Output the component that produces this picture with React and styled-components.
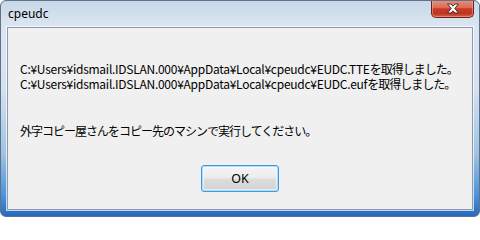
import React from "react";
import styled, { createGlobalStyle } from "styled-components";

const Global = createGlobalStyle`
  html, body { margin: 0; padding: 0; background: #ffffff; }
  body { width: 480px; height: 217px; overflow: hidden; }
`;

const Window = styled.div`
  box-sizing: border-box;
  width: 480px;
  height: 217px;
  display: flex;
  flex-direction: column;
  border: 1px solid #5f7388;
  border-radius: 6px;
  background: linear-gradient(
    to bottom,
    #c8d7e7 0%,
    #dce6f1 12%,
    #d6e2ef 40%,
    #a2c4e6 70%,
    #4f94da 90%,
    #2a68bd 100%
  );
  font-family: "Noto Sans CJK JP", "Noto Sans", sans-serif;
  overflow: hidden;
`;

const TitleBar = styled.div`
  height: 26px;
  display: flex;
  align-items: flex-start;
  justify-content: space-between;
  padding-left: 7px;
  padding-right: 5px;
`;

const Title = styled.div`
  font-family: "Noto Sans", "Noto Sans CJK JP", sans-serif;
  font-size: 12px;
  line-height: 14px;
  margin-top: 6px;
  color: #000;
`;

const CloseButton = styled.div`
  box-sizing: border-box;
  width: 43px;
  height: 18px;
  margin-top: -1px;
  display: flex;
  align-items: center;
  justify-content: center;
  border: 1px solid #6b2016;
  border-top: none;
  border-radius: 0 0 5px 5px;
  background: linear-gradient(
    to bottom,
    #e8917f 0%,
    #dc6a54 45%,
    #c63a24 52%,
    #bf3520 80%,
    #d46249 100%
  );
  box-shadow: inset 0 0 0 1px rgba(255, 190, 175, 0.45);
`;

const Client = styled.div`
  flex: 1;
  display: flex;
  flex-direction: column;
  margin: 0 6px 6px 6px;
  background: #f0f0f0;
  border: 1px solid #8d9aab;
  box-shadow: 0 0 0 1px rgba(255, 255, 255, 0.7);
`;

const Message = styled.div`
  padding: 33px 12px 0 12px;
  font-size: 12px;
  line-height: 15px;
  color: #000;
  letter-spacing: -0.27px;
  white-space: nowrap;
`;

const Paragraph = styled.div`
  margin-top: ${(p) => p.$gap || 0}px;
`;

const Line = styled.div`
  height: 15px;
`;

const Jp = styled.span`
  letter-spacing: -1px;
`;

const Footer = styled.div`
  margin-top: auto;
  display: flex;
  justify-content: center;
  padding-bottom: 17px;
`;

const Button = styled.button`
  box-sizing: border-box;
  width: 78px;
  height: 27px;
  border: 1px solid #3c9ce2;
  border-radius: 3px;
  background: linear-gradient(
    to bottom,
    #f4f4f4 0%,
    #ececec 48%,
    #dddddd 52%,
    #d2d2d2 100%
  );
  box-shadow: inset 0 0 0 1px #a9dcf6, inset 0 0 0 2px rgba(255, 255, 255, 0.5);
  font-family: "Noto Sans", sans-serif;
  font-size: 12.5px;
  color: #000;
  padding: 0;
`;

function CloseGlyph() {
  return (
    <svg width="14" height="11" viewBox="0 0 14 11">
      <path
        d="M1.5 1 H5 L7 3.2 L9 1 H12.5 L8.8 5.5 L12.5 10 H9 L7 7.8 L5 10 H1.5 L5.2 5.5 Z"
        fill="#ffffff"
        stroke="#4a2b28"
        strokeWidth="1"
        strokeLinejoin="round"
      />
    </svg>
  );
}

export default function App() {
  return (
    <>
      <Global />
      <Window>
        <TitleBar>
          <Title>cpeudc</Title>
          <CloseButton>
            <CloseGlyph />
          </CloseButton>
        </TitleBar>
        <Client>
          <Message>
            <Paragraph>
              <Line>
                C:¥Users¥idsmail.IDSLAN.000¥AppData¥Local¥cpeudc¥EUDC.TTE<Jp>を取得しました。</Jp>
              </Line>
              <Line>
                C:¥Users¥idsmail.IDSLAN.000¥AppData¥Local¥cpeudc¥EUDC.euf<Jp>を取得しました。</Jp>
              </Line>
            </Paragraph>
            <Paragraph $gap={32}>
              <Line>
                <Jp>外字コピー屋さんをコピー先のマシンで実行してください。</Jp>
              </Line>
            </Paragraph>
          </Message>
          <Footer>
            <Button>OK</Button>
          </Footer>
        </Client>
      </Window>
    </>
  );
}
